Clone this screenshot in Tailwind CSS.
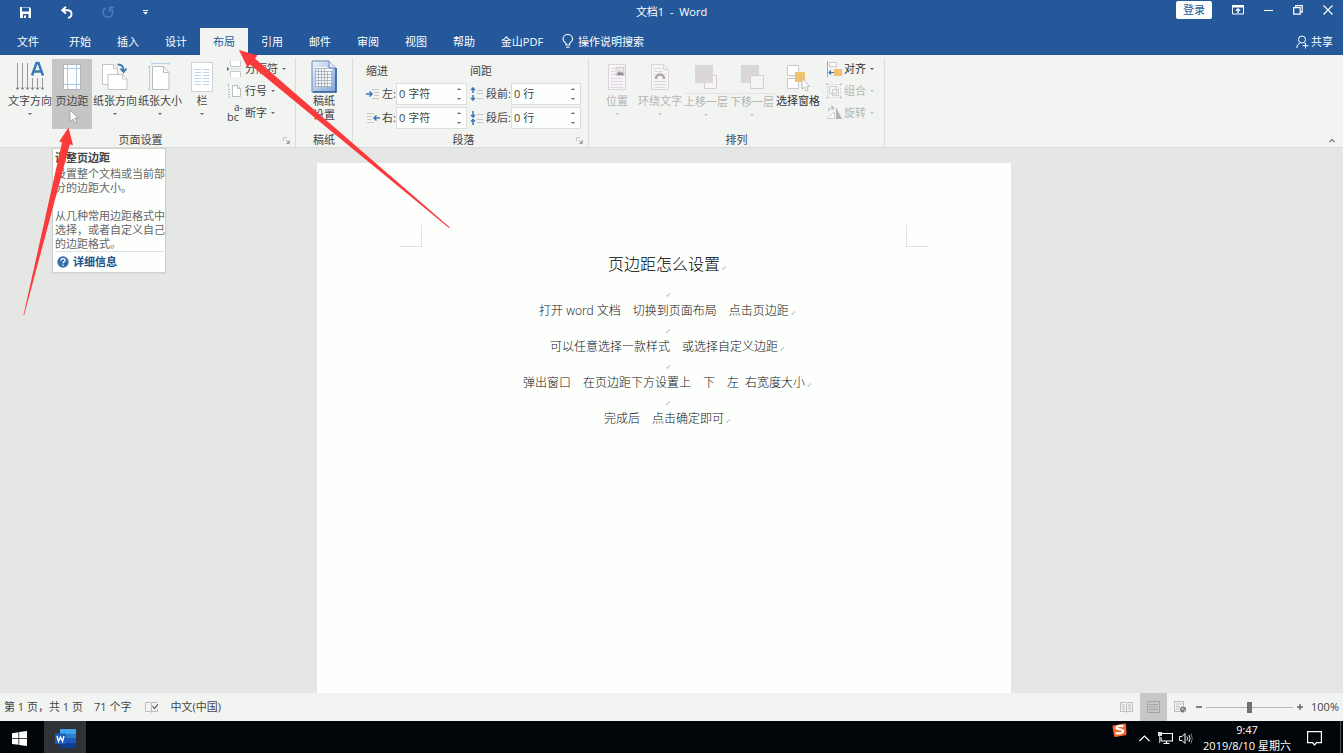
<!DOCTYPE html>
<html lang="zh-CN">
<head>
<meta charset="utf-8">
<title>文档1 - Word</title>
<script src="https://cdn.jsdelivr.net/npm/@tailwindcss/browser@4"></script>
</head>
<body class="relative flex h-screen flex-col overflow-hidden bg-[#e5e7e5] font-['Open_Sans','Noto_Sans_CJK_SC',sans-serif] text-[11px] leading-4 text-[#444]">

<svg class="hidden">
  <symbol id="caret" viewBox="0 0 4 2"><path d="M0 0h4L2 2z" fill="currentColor" fill-opacity=".8"/></symbol>
  <symbol id="launch" viewBox="0 0 7 7"><path d="M.5 4V.5H4" fill="none" stroke="#c5c5c5"/><path d="M3 3l2 2M6.500 3.500v3h-3z" stroke="#999" fill="#999" stroke-width=".7"/></symbol>
  <symbol id="mark" viewBox="0 0 4 4"><path d="M3.500 0v1.500L1 3M.500 3.200l1.500-1.500M.500 3.200H2" fill="none" stroke="#b0b0b0" stroke-width=".7"/></symbol>
</svg>

<header class="shrink-0 bg-[#24589a] text-white">
  <div class="flex h-7 items-start">
    <div class="flex h-6 flex-1 items-center">
      <button aria-label="保存" class="mr-[29px] ml-[19px]"><svg class="block" width="13" height="13" viewBox="0 0 13 13"><path d="M1 1h9.500L12 2.500V12H1z" fill="#fff"/><path d="M3 1.500h7v4H3z" fill="#24589a"/><path d="M4 8h5.500v4H4z" fill="#24589a"/><path d="M5 9.500h2V12H5z" fill="#fff"/></svg></button>
      <button aria-label="撤消" class="mr-[29px]"><svg class="block" width="12" height="13" viewBox="0 0 12 13"><path d="M5 .8L1.200 4.200 5 7.600M1.500 4.200h5.200c5 0 5 7 .3 7.600" fill="none" stroke="#fff" stroke-width="1.900"/></svg></button>
      <button aria-label="重复" class="mr-[29px]"><svg class="block" width="12" height="13" viewBox="0 0 12 13"><path d="M4 1.800C.500 3.500.500 6.500 1.500 8.500c1.700 3.600 7 3.500 8.700 0C11 6 10.500 4 9 3M7.500 6V1.500H12" fill="none" stroke="#4d7fbd" stroke-width="1.500"/></svg></button>
      <button aria-label="自定义快速访问工具栏"><svg class="block" width="5" height="5" viewBox="0 0 5 5"><path d="M0 0h5v1H0zM0 2h5L2.500 4.500z" fill="#fff"/></svg></button>
    </div>
    <h1 class="whitespace-pre leading-6">文档1  -  Word</h1>
    <div class="flex h-5 flex-1 items-center justify-end">
      <button class="mr-[11px] h-[18px] w-9 rounded-xs bg-white leading-[18px] text-[#24589a]">登录</button>
      <button aria-label="功能区显示选项" class="flex w-[30px] justify-center"><svg width="12" height="10" viewBox="0 0 12 10"><path d="M.5.500h11v8.500H.500z" fill="none" stroke="#fff"/><path d="M0 0h12v2.500H0z" fill="#fff"/><path d="M6 8V4M4 5.800L6 3.800l2 2" fill="none" stroke="#fff" stroke-width="1.300"/></svg></button>
      <button aria-label="最小化" class="flex w-[30px] justify-center"><svg width="9" height="10" viewBox="0 0 9 10"><path d="M0 5.500h9" stroke="#fff"/></svg></button>
      <button aria-label="还原" class="flex w-[30px] justify-center"><svg width="10" height="10" viewBox="0 0 10 10"><path d="M.700 2.700h6.500v6.500H.700zM2.700 2.500V.700h6.500v6.500H7.500" fill="none" stroke="#fff" stroke-width="1.200"/></svg></button>
      <button aria-label="关闭" class="flex w-[30px] justify-center"><svg width="10" height="10" viewBox="0 0 10 10"><path d="M.5.500l9 9M9.500.500l-9 9" stroke="#fff" stroke-width="1.100"/></svg></button>
    </div>
  </div>
  <nav class="flex h-[27px] items-stretch">
    <button class="w-14">文件</button>
    <button class="w-12">开始</button>
    <button class="w-12">插入</button>
    <button class="w-12">设计</button>
    <button class="w-12 bg-[#f2f4f2] text-[#24589a]">布局</button>
    <button class="w-12">引用</button>
    <button class="w-12">邮件</button>
    <button class="w-12">审阅</button>
    <button class="w-12">视图</button>
    <button class="w-12">帮助</button>
    <button class="w-[68px]">金山PDF</button>
    <button class="ml-1.5 flex items-center gap-1"><svg width="12" height="15" viewBox="0 0 12 15"><path d="M4 11V9.500C2 8 1 7 1 5a4.800 4.500 0 0 1 9.600 0c0 2-1 3-3 4.500V11zM4 13.200h3.600" fill="none" stroke="#fff" stroke-width="1.100"/></svg>操作说明搜索</button>
    <button class="mr-2.5 ml-auto flex items-center gap-0.5"><svg width="13" height="14" viewBox="0 0 13 14"><circle cx="6" cy="4.500" r="3.500" fill="none" stroke="#fff"/><path d="M.8 13c0-3 1.700-4.500 3.500-5M7.500 7.800l1 .8M9.500 8v5.500M6.700 10.700h5.800" fill="none" stroke="#fff"/></svg>共享</button>
  </nav>
</header>

<div class="flex h-[93px] shrink-0 border-b border-[#d9dbd9] bg-[#f2f4f2]">
  <!-- 页面设置 -->
  <section class="mt-[3px] flex w-[296px] flex-col border-r border-[#dcdedc]">
    <div class="flex flex-1 pt-px pl-2">
      <button class="flex h-[70px] w-11 flex-col items-center whitespace-nowrap pt-0.5">
        <svg class="h-8 w-7" viewBox="0 0 28 32"><path d="M1.500 2v26M6.500 2v26M11.500 2v26M16.500 17v11M21.500 17v11M26.500 17v11" stroke="#999"/><path d="M0 26.500l1.500 2 1.500-2M5 26.500l1.500 2 1.500-2M10 26.500l1.500 2 1.500-2M15 26.500l1.500 2 1.500-2M20 26.500l1.500 2 1.500-2M25 26.500l1.500 2 1.500-2" stroke="#777" fill="none"/><path d="M16 14.500L20.500 2h2L27 14.500M18 10.500h7" fill="none" stroke="#3a76b4" stroke-width="2.400"/></svg>
        <span>文字方向</span><svg class="mt-1 h-0.5 w-1"><use href="#caret"/></svg>
      </button>
      <button class="flex h-[70px] w-10 flex-col items-center bg-[#c4c6c4] pt-0.5">
        <svg class="h-8 w-5" viewBox="0 0 20 32"><path d="M1.500 3.500h17v25h-17z" fill="#fff" stroke="#b5b5b5"/><path d="M5.500 4v24M14.500 4v24M2 7.500h16M2 23.500h16" stroke="#a9c9e8"/></svg>
        <span>页边距</span>
      </button>
      <button class="flex h-[70px] w-[46px] flex-col items-center whitespace-nowrap pt-0.5">
        <svg class="h-8 w-7" viewBox="0 0 28 32"><path d="M1.500 3.500h11l4 4v16h-15z" fill="#fff" stroke="#c5c5c5"/><path d="M12.500 3.500v4h4" fill="none" stroke="#c5c5c5"/><path d="M7 13.500h14.500l4.500 4.500v10.500H7z" fill="#fff" stroke="#c5c5c5"/><path d="M21.500 13.500V18H26" fill="none" stroke="#c5c5c5"/><path d="M16.500 3.500c5 0 6 2 6 7M19.500 7.500l3 3.500 3-3.500" fill="none" stroke="#3a76b4" stroke-width="1.800"/></svg>
        <span>纸张方向</span><svg class="mt-1 h-0.5 w-1"><use href="#caret"/></svg>
      </button>
      <button class="flex h-[70px] w-11 flex-col items-center whitespace-nowrap pt-0.5">
        <svg class="h-8 w-6" viewBox="0 0 24 32"><path d="M4.500 5.500h11l5.500 6v17H4.500z" fill="#fff" stroke="#bdbdbd"/><path d="M15.500 5.500v6H21" fill="none" stroke="#bdbdbd"/><path d="M4 2.500h17M4 1v3M21 1v3M1.500 5v24M0 5.500h3M0 28.500h3" stroke="#b5d0ea"/></svg>
        <span>纸张大小</span><svg class="mt-1 h-0.5 w-1"><use href="#caret"/></svg>
      </button>
      <button class="flex h-[70px] w-10 flex-col items-center pt-0.5">
        <svg class="h-8 w-[22px]" viewBox="0 0 22 32"><path d="M.5 1.500h21v29H.500z" fill="#fff" stroke="#d0d0d0"/><path d="M3.500 8.500H10M12 8.500h6.500M3.500 11.500H10M12 11.500h6.500M3.500 14.500H10M12 14.500h6.500M3.500 17.500H10M12 17.500h6.500M3.500 20.500H10M12 20.500h6.500M3.500 23.500H10M12 23.500h6.500" stroke="#b8d6f0"/></svg>
        <span>栏</span><svg class="mt-1 h-0.5 w-1"><use href="#caret"/></svg>
      </button>
      <div class="-mt-px ml-[5px] flex flex-col">
        <button class="flex h-[22px] items-center"><svg class="mr-1 h-4 w-3.5" viewBox="0 0 14 16"><path d="M3.500 0v5.500h10V0M3.500 16v-5.500h10V16" fill="#fff" stroke="#c8c8c8"/><path d="M4 8h10" stroke="#d0d0d0" stroke-dasharray="2 1"/><path d="M0 6l2.500 2L0 10z" fill="#3a76b4"/></svg>分隔符<svg class="ml-1 h-0.5 w-1"><use href="#caret"/></svg></button>
        <button class="flex h-[22px] items-center"><svg class="mr-1 h-4 w-3.5" viewBox="0 0 14 16"><path d="M5.500 2.500h5l3 3v8h-8z" fill="#fff" stroke="#bdbdbd"/><path d="M10.500 2.500v3h3" fill="none" stroke="#bdbdbd"/><path d="M1.500 1v3M1 6.500h2M1 9h2M1 11.500h2M1 14h2" stroke="#9fc0e0"/></svg>行号<svg class="ml-1 h-0.5 w-1"><use href="#caret"/></svg></button>
        <button class="flex h-[22px] items-center"><span class="mr-1 flex h-4 w-3.5 flex-col text-left text-[11px]"><span class="pl-[7px] text-[10px] leading-1">a-</span><span class="leading-4">bc</span></span>断字<svg class="ml-1 h-0.5 w-1"><use href="#caret"/></svg></button>
      </div>
    </div>
    <div class="flex h-3.5 items-center"><h2 class="flex-1 pr-0.5 text-center leading-3.5">页面设置</h2><button aria-label="页面设置对话框" class="w-3"><svg class="block h-[7px] w-[7px]"><use href="#launch"/></svg></button></div>
  </section>

  <!-- 稿纸 -->
  <section class="mt-[3px] flex w-[57px] flex-col border-r border-[#dcdedc]">
    <button class="mt-px flex flex-1 flex-col items-center pt-px leading-3.5">
      <svg class="mb-px h-[33px] w-[26px]" viewBox="0 0 26 33"><defs><linearGradient id="g" x1="0" y1="0" x2="1" y2="1"><stop offset="0" stop-color="#eef4fb"/><stop offset="1" stop-color="#7ea3d8"/></linearGradient></defs><path d="M1 1h17l7 7v24H1z" fill="url(#g)" stroke="#6f88b5"/><path d="M18 1v7h7" fill="#dfe9f7" stroke="#6f88b5"/><path d="M25 8v24H2" fill="none" stroke="#345f9f" stroke-width="1.600"/><path d="M4 7h12v2h5v18H4z" fill="#f6f8fb"/><path d="M4 8.500h12M4 11.500h17M4 14.500h17M4 17.500h17M4 20.500h17M4 23.500h17M4 26.500h17M4.500 8v19M7.500 8v19M10.500 8v19M13.500 8v19M16.500 11v16M20.500 11v16" stroke="#a2a9b3" stroke-width=".8"/></svg>
      <span>稿纸<br>设置</span>
    </button>
    <h2 class="text-center leading-3.5">稿纸</h2>
  </section>

  <!-- 段落 -->
  <section class="mt-[3px] flex w-[236px] flex-col border-r border-[#dcdedc]">
    <div class="flex flex-1 gap-[3px] pt-1 pl-[13px]">
      <div class="flex w-[101px] flex-col gap-0.5">
        <h3 class="h-[19px] leading-[18px]">缩进</h3>
        <div class="flex h-[22px] items-center"><svg class="mr-0.5 h-3 w-3.5" viewBox="0 0 14 12"><path d="M0 6h6M3.500 3.500L6 6 3.500 8.500" fill="none" stroke="#3a76b4" stroke-width="1.500"/><path d="M6 1.500h7M8 4.500h5M8 7.500h5M6 10.500h7" stroke="#c6c6c6"/></svg><label for="il" class="w-3.5">左:</label>
          <div class="flex h-full flex-1 border border-[#dddfdd] bg-[#fdfffd]"><input id="il" value="0 字符" class="w-0 flex-1 pl-0.5 outline-none"><div class="flex w-3.5 flex-col items-center justify-around"><button aria-label="增加"><svg class="block h-0.5 w-1 rotate-180"><use href="#caret"/></svg></button><button aria-label="减少"><svg class="block h-0.5 w-1"><use href="#caret"/></svg></button></div></div></div>
        <div class="flex h-[22px] items-center"><svg class="mr-0.5 h-3 w-3.5" viewBox="0 0 14 12"><path d="M14 6H8M10.500 3.500L8 6l2.500 2.500" fill="none" stroke="#3a76b4" stroke-width="1.500"/><path d="M1 1.500h7M1 4.500h5M1 7.500h5M1 10.500h7" stroke="#c6c6c6"/></svg><label for="ir" class="w-3.5">右:</label>
          <div class="flex h-full flex-1 border border-[#dddfdd] bg-[#fdfffd]"><input id="ir" value="0 字符" class="w-0 flex-1 pl-0.5 outline-none"><div class="flex w-3.5 flex-col items-center justify-around"><button aria-label="增加"><svg class="block h-0.5 w-1 rotate-180"><use href="#caret"/></svg></button><button aria-label="减少"><svg class="block h-0.5 w-1"><use href="#caret"/></svg></button></div></div></div>
      </div>
      <div class="flex w-[111px] flex-col gap-0.5">
        <h3 class="h-[19px] leading-[18px]">间距</h3>
        <div class="flex h-[22px] items-center"><svg class="mr-0.5 h-3.5 w-3.5" viewBox="0 0 14 14"><path d="M3 1v5M1 3l2-2 2 2M3 8v5M1 11l2 2 2-2" fill="none" stroke="#3a76b4" stroke-width="1.500"/><path d="M7 3.500h6M7 6.500h6M7 11.500h6" stroke="#c6c6c6"/></svg><label for="sb" class="w-[25px]">段前:</label>
          <div class="flex h-full flex-1 border border-[#dddfdd] bg-[#fdfffd]"><input id="sb" value="0 行" class="w-0 flex-1 pl-0.5 outline-none"><div class="flex w-3.5 flex-col items-center justify-around"><button aria-label="增加"><svg class="block h-0.5 w-1 rotate-180"><use href="#caret"/></svg></button><button aria-label="减少"><svg class="block h-0.5 w-1"><use href="#caret"/></svg></button></div></div></div>
        <div class="flex h-[22px] items-center"><svg class="mr-0.5 h-3.5 w-3.5" viewBox="0 0 14 14"><path d="M3 0v6M1 4l2 2 2-2M3 14V8M1 10.500l2-2 2 2" fill="none" stroke="#3a76b4" stroke-width="1.500"/><path d="M7 3.500h6M7 8.500h6M7 11.500h6" stroke="#c6c6c6"/></svg><label for="sa" class="w-[25px]">段后:</label>
          <div class="flex h-full flex-1 border border-[#dddfdd] bg-[#fdfffd]"><input id="sa" value="0 行" class="w-0 flex-1 pl-0.5 outline-none"><div class="flex w-3.5 flex-col items-center justify-around"><button aria-label="增加"><svg class="block h-0.5 w-1 rotate-180"><use href="#caret"/></svg></button><button aria-label="减少"><svg class="block h-0.5 w-1"><use href="#caret"/></svg></button></div></div></div>
      </div>
    </div>
    <div class="flex h-3.5 items-center"><h2 class="flex-1 pr-0.5 text-center leading-3.5">段落</h2><button aria-label="段落对话框" class="w-3"><svg class="block h-[7px] w-[7px]"><use href="#launch"/></svg></button></div>
  </section>

  <!-- 排列 -->
  <section class="mt-[3px] flex w-[296px] flex-col border-r border-[#dcdedc]">
    <div class="flex flex-1 pt-px pl-2 text-[#b4b4b4]">
      <button class="flex h-[70px] w-10 flex-col items-center pt-0.5">
        <svg class="h-8 w-[18px]" viewBox="0 0 18 32"><path d="M.5 3.500h17v25H.500z" fill="#f7f4f7" stroke="#d9d5d9"/><path d="M3 7.500h4M3 10.500h4M3 13.500h4M3 17.500h12M3 20.500h12M3 23.500h12M3 26.500h12" stroke="#ddd8dd"/><path d="M8 6.500h8v8H8z" fill="#e7e3e7" stroke="#cfcbcf"/><path d="M8.500 14l2.500-4 2 2 1.500-1 1.500 3z" fill="#8f8b8f"/></svg>
        <span>位置</span><svg class="mt-1 h-0.5 w-1"><use href="#caret"/></svg>
      </button>
      <button class="flex h-[70px] w-[46px] flex-col items-center whitespace-nowrap pt-0.5">
        <svg class="h-8 w-[18px]" viewBox="0 0 18 32"><path d="M.5 3.500h12l5 5v20H.500z" fill="#f7f4f7" stroke="#d9d5d9"/><path d="M12.500 3.500v5h5" fill="none" stroke="#d9d5d9"/><path d="M3 7.500h7M3 10.500h9M3 13.500h2M13 13.500h2M3 16.500h2M13 16.500h2M3 20.500h12M3 23.500h12M3 26.500h12" stroke="#ddd8dd"/><path d="M5 18c0-6 8-6 8 0" fill="none" stroke="#aaa6aa" stroke-width="2.400"/></svg>
        <span>环绕文字</span><svg class="mt-1 h-0.5 w-1"><use href="#caret"/></svg>
      </button>
      <button class="flex h-[70px] w-[46px] flex-col items-center whitespace-nowrap pt-0.5">
        <svg class="h-8 w-6" viewBox="0 0 24 32"><path d="M10.500 14.500h12v13h-12z" fill="#f7f4f7" stroke="#d2ced2"/><path d="M1 4h18v18H1z" fill="#dad6da"/></svg>
        <span class="border-t border-[#e4e4e4]">上移一层</span><svg class="mt-1 h-0.5 w-1"><use href="#caret"/></svg>
      </button>
      <button class="flex h-[70px] w-[46px] flex-col items-center whitespace-nowrap pt-0.5">
        <svg class="h-8 w-6" viewBox="0 0 24 32"><path d="M1 4h18v18H1z" fill="#dad6da"/><path d="M10.500 14.500h13v13h-13z" fill="#f7f4f7" stroke="#d2ced2"/></svg>
        <span class="border-t border-[#e4e4e4]">下移一层</span><svg class="mt-1 h-0.5 w-1"><use href="#caret"/></svg>
      </button>
      <button class="flex h-[70px] w-[46px] flex-col items-center whitespace-nowrap pt-0.5 text-[#333]">
        <svg class="h-8 w-6" viewBox="0 0 24 32"><path d="M1.500 4.500h11v10h-11zM1.500 17.500h11v10h-11z" fill="#fff" stroke="#c9c9c9"/><path d="M9 11h10v10H9z" fill="#efc170"/><path d="M16 17v11l2.500-2 1.500 4 2-1-1.500-3.500h3z" fill="#fff" stroke="#aaa" stroke-width=".8"/></svg>
        <span>选择窗格</span>
      </button>
      <div class="-mt-px ml-[5px] flex flex-col">
        <button class="flex h-[22px] items-center text-[#333]"><svg class="mr-0.5 h-4 w-4" viewBox="0 0 16 16"><path d="M1.500 0v16" stroke="#aaa"/><path d="M3.500 1.500h7v4h-7z" fill="#fff" stroke="#c9c9c9"/><path d="M8 8h8v7H8z" fill="#efc170"/><path d="M8 11.500H3M5 9.500l-2 2 2 2" fill="none" stroke="#3a76b4" stroke-width="1.200"/></svg>对齐<svg class="ml-1 h-0.5 w-1"><use href="#caret"/></svg></button>
        <button class="flex h-[22px] items-center"><svg class="mr-0.5 h-4 w-4" viewBox="0 0 16 16"><path d="M1.500 1.500h13v13h-13z" fill="none" stroke="#d5d1d5" stroke-dasharray="2 2"/><path d="M3.500 3.500h7v7h-7zM6.500 6.500h6v6h-6z" fill="#f7f4f7" fill-opacity=".5" stroke="#d2ced2"/><path d="M.5.500h1.500v1.500H.500zM14 .500h1.500v1.500H14zM.500 14h1.500v1.500H.500zM14 14h1.500v1.500H14z" fill="#bbb7bb"/></svg>组合<svg class="ml-1 h-0.5 w-1"><use href="#caret"/></svg></button>
        <button class="flex h-[22px] items-center"><svg class="mr-0.5 h-4 w-4" viewBox="0 0 16 16"><path d="M1 13.500h7.500V7z" fill="#fff" stroke="#cfcbcf"/><path d="M10 2l6 12h-6z" fill="#b5b1b5"/><path d="M2.500 6c0-3 2-3.500 5-3M5.500.500l2.500 2.500-2.500 2" fill="none" stroke="#aaa"/></svg>旋转<svg class="ml-1 h-0.5 w-1"><use href="#caret"/></svg></button>
      </div>
    </div>
    <h2 class="text-center leading-3.5">排列</h2>
  </section>
  <button aria-label="折叠功能区" class="mt-auto mr-2 mb-1 ml-auto"><svg class="block" width="6" height="5" viewBox="0 0 6 5"><path d="M.5 4L3 1.500 5.500 4" fill="none" stroke="#777" stroke-width="1.200"/></svg></button>
</div>

<main class="flex min-h-0 flex-1 justify-center pt-[15px] pr-[15px]">
  <article class="w-[694px] bg-[#fdfffd] pt-[62px] text-center text-xs leading-[18px] font-light text-[#111]">
    <div class="flex justify-between px-[83px]"><span class="h-[22px] w-[22px] border-r border-b border-[#dfe1df]"></span><span class="h-[22px] w-[22px] border-b border-l border-[#dfe1df]"></span></div>
    <h2 class="mb-[3px] text-base leading-[34px] text-black">页边距怎么设置<span class="inline-block w-0"><svg class="ml-0.5 h-1 w-1"><use href="#mark"/></svg></span></h2>
    <p><span class="inline-block w-0"><svg class="ml-0.5 h-1 w-1"><use href="#mark"/></svg></span></p>
    <p>打开 word 文档　切换到页面布局　点击页边距<span class="inline-block w-0"><svg class="ml-0.5 h-1 w-1"><use href="#mark"/></svg></span></p>
    <p><span class="inline-block w-0"><svg class="ml-0.5 h-1 w-1"><use href="#mark"/></svg></span></p>
    <p>可以任意选择一款样式　或选择自定义边距<span class="inline-block w-0"><svg class="ml-0.5 h-1 w-1"><use href="#mark"/></svg></span></p>
    <p><span class="inline-block w-0"><svg class="ml-0.5 h-1 w-1"><use href="#mark"/></svg></span></p>
    <p>弹出窗口　在页边距下方设置上　下　左&nbsp; 右宽度大小<span class="inline-block w-0"><svg class="ml-0.5 h-1 w-1"><use href="#mark"/></svg></span></p>
    <p><span class="inline-block w-0"><svg class="ml-0.5 h-1 w-1"><use href="#mark"/></svg></span></p>
    <p>完成后　点击确定即可<span class="inline-block w-0"><svg class="ml-0.5 h-1 w-1"><use href="#mark"/></svg></span></p>
  </article>
</main>

<footer class="flex h-7 shrink-0 items-center bg-[#f2f4f2] pr-1 pl-1">
  <span class="mr-[11px]">第 1 页，共 1 页</span>
  <span class="mr-3.5">71 个字</span>
  <button aria-label="校对" class="mr-3"><svg class="block" width="13" height="12" viewBox="0 0 13 12"><path d="M6 1.500H.500v9H6l.5 1 .5-1h5.500v-3M6.500 1.500v9M7 1.500h5.500" fill="none" stroke="#bdbdbd"/><path d="M7.500 5l2 2.500L13 3" fill="none" stroke="#555" stroke-width="1.200"/></svg></button>
  <span>中文(中国)</span>
  <div class="ml-auto flex h-full items-center">
    <button aria-label="阅读视图" class="mr-[7px]"><svg class="block" width="13" height="12" viewBox="0 0 13 12"><path d="M.5 1.500h5l1 1 1-1h5v9h-5l-1 1-1-1h-5zM6.500 2v9M2 4h3M2 6h3M2 8h3M8 4h3M8 6h3M8 8h3" fill="none" stroke="#bbb"/></svg></button>
    <button aria-label="页面视图" class="flex h-full w-[27px] items-center justify-center bg-[#c6c8c6]"><svg width="13" height="12" viewBox="0 0 13 12"><path d="M.5.500h12v11H.500zM2 3.500h9M2 6h9M2 8.500h9" fill="none" stroke="#a3a5a3"/></svg></button>
    <button aria-label="Web 版式视图" class="mr-[9px] ml-[7px]"><svg class="block" width="13" height="12" viewBox="0 0 13 12"><path d="M6 10.500H.500v-10h9V5M2 3h6M2 5.500h4M2 8h3" fill="none" stroke="#bbb"/><circle cx="9" cy="8.500" r="3" fill="#777"/><path d="M7 8l2-1 1 2zM10 9l1.500.500-1 1.500z" fill="#f2f4f2"/></svg></button>
    <button aria-label="缩小"><svg class="block" width="6" height="8" viewBox="0 0 6 8"><path d="M0 4h6" stroke="#666" stroke-width="1.600"/></svg></button>
    <input type="range" aria-label="缩放" min="0" max="200" value="100" class="mx-1 h-3 w-[87px] appearance-none bg-transparent [&::-webkit-slider-runnable-track]:h-px [&::-webkit-slider-runnable-track]:bg-[#b5b7b5] [&::-webkit-slider-thumb]:-mt-[5px] [&::-webkit-slider-thumb]:h-[11px] [&::-webkit-slider-thumb]:w-[5px] [&::-webkit-slider-thumb]:appearance-none [&::-webkit-slider-thumb]:bg-[#707070]">
    <button aria-label="放大" class="mr-2"><svg class="block" width="6" height="8" viewBox="0 0 6 8"><path d="M0 4h6M3 1v6" stroke="#666" stroke-width="1.400"/></svg></button>
    <span>100%</span>
  </div>
</footer>

<div class="flex h-8 shrink-0 bg-[#020509] text-white">
  <button aria-label="开始" class="flex w-11 items-center pt-0.5 pl-3"><svg width="15" height="15" viewBox="0 0 15 15"><path d="M0 2.200L6.500 1.200v5.900H0zM7.200 1.100L15 0v7.100H7.200zM0 7.800h6.500v6L0 12.900zM7.200 7.800H15V15l-7.800-1.100z" fill="#fff"/></svg></button>
  <button aria-label="Word" class="flex w-[42px] items-center justify-center bg-[#2f3336] pt-0.5"><svg width="21" height="19" viewBox="0 0 21 19"><path d="M5 0h16v5H5z" fill="#41a5ee"/><path d="M5 5h16v4.500H5z" fill="#2b7cd3"/><path d="M5 9.500h16V14H5z" fill="#185abd"/><path d="M5 14h16v5H5z" fill="#103f91"/><path d="M0 4.500h11v10.500H0z" fill="#185abd"/><path d="M2 7l1.500 5.500L5.500 8l2 4.500L9 7" fill="none" stroke="#fff" stroke-width="1.400"/></svg></button>
  <div class="ml-auto flex items-center pt-0.5">
    <button aria-label="搜狗输入法" class="mr-3 self-start"><svg class="block" width="15" height="14" viewBox="0 0 15 14"><path d="M1 2.500L12.500.500Q14 .300 14 1.500l.5 9.500q0 1-1 1.200L3.500 14q-1.300 0-1.500-1L.5 4Q.300 2.800 1 2.500z" fill="#f0652a"/><path d="M11.500 3.200C8 2.500 4 3 4.500 5s6.500.7 6.500 3-4 3-7.500 2" fill="none" stroke="#fff" stroke-width="2.200"/></svg></button>
    <button aria-label="显示隐藏的图标" class="mr-2"><svg class="block" width="11" height="7" viewBox="0 0 11 7"><path d="M.5 6l5-5 5 5" fill="none" stroke="#fff" stroke-width="1.200"/></svg></button>
    <button aria-label="网络" class="mr-1.5"><svg class="block" width="15" height="12" viewBox="0 0 15 12"><path d="M4 1.500h10.500V9H3V5M8.500 9v2.500M5.500 11.500h6" fill="none" stroke="#fff" stroke-width="1.200"/><path d="M0 0h4v4H0z" fill="#ddd"/><path d="M1.500 4v7" stroke="#aaa"/></svg></button>
    <button aria-label="音量" class="mr-2.5"><svg class="block" width="14" height="13" viewBox="0 0 14 13"><path d="M.6 4.500H3L6 1.500v10L3 8.500H.600zM8 4.500q1.200 2 0 4M10 3q2 3.500 0 7" fill="none" stroke="#fff"/><path d="M12 1.500q2.500 5 0 10" fill="none" stroke="#777"/></svg></button>
    <div class="mr-4 text-center leading-4">9:47<br>2019/8/10 星期六</div>
    <button aria-label="通知" class="mr-[18px]"><svg class="block" width="15" height="15" viewBox="0 0 15 15"><path d="M.6.600h13.800v11H9.500L7.500 14l-2-2.400H.600z" fill="none" stroke="#fff" stroke-width="1.200"/></svg></button>
    <button aria-label="显示桌面" class="mr-0.5 -mt-0.5 h-8 w-px bg-[#4a4d50]"></button>
  </div>
</div>

<!-- 页边距提示 -->
<aside role="tooltip" class="absolute top-[148px] left-[52px] w-[114px] border border-[#cfd1cf] bg-[#fdfffd] whitespace-nowrap text-[#666] shadow-xs">
  <h3 class="pl-0.5 leading-[18px] font-bold text-[#444]">调整页边距</h3>
  <p class="pl-0.5 leading-3.5">设置整个文档或当前部<br>分的边距大小。<br><br>从几种常用边距格式中<br>选择，或者自定义自己<br>的边距格式。</p>
  <a href="#" class="mx-0.5 flex h-[21px] items-center gap-1 border-t border-[#dfe1df] pl-0.5 font-bold text-[#1f5288]"><svg width="12" height="12" viewBox="0 0 12 12"><circle cx="6" cy="6" r="5.700" fill="#3570ad"/><path d="M4 4.500C4 2 8 2 8 4.300 8 5.700 6 5.800 6 7.300M6 8.500v1.300" fill="none" stroke="#fff" stroke-width="1.400"/></svg>详细信息</a>
</aside>

<!-- 鼠标指针与红色指示箭头 -->
<svg class="pointer-events-none absolute top-0 left-0" width="460" height="330" viewBox="0 0 460 330">
  <path d="M70 110v11.500l2.800-2.500 1.900 4.300 2-.9-1.900-4.200h3.700z" fill="#fff" stroke="#8a8a8a" stroke-width=".7"/>
  <path d="M239 50L257.500 55.500 255 58.500 450 227.500 449 228 250 64.500 247.500 67.500z" fill="#fb3b3b"/>
  <path d="M68.500 127.500L73 145 69.800 144.500 24 315.500 23.500 315 62 142.500 59.300 141.500z" fill="#fb3b3b"/>
</svg>
</body>
</html>
